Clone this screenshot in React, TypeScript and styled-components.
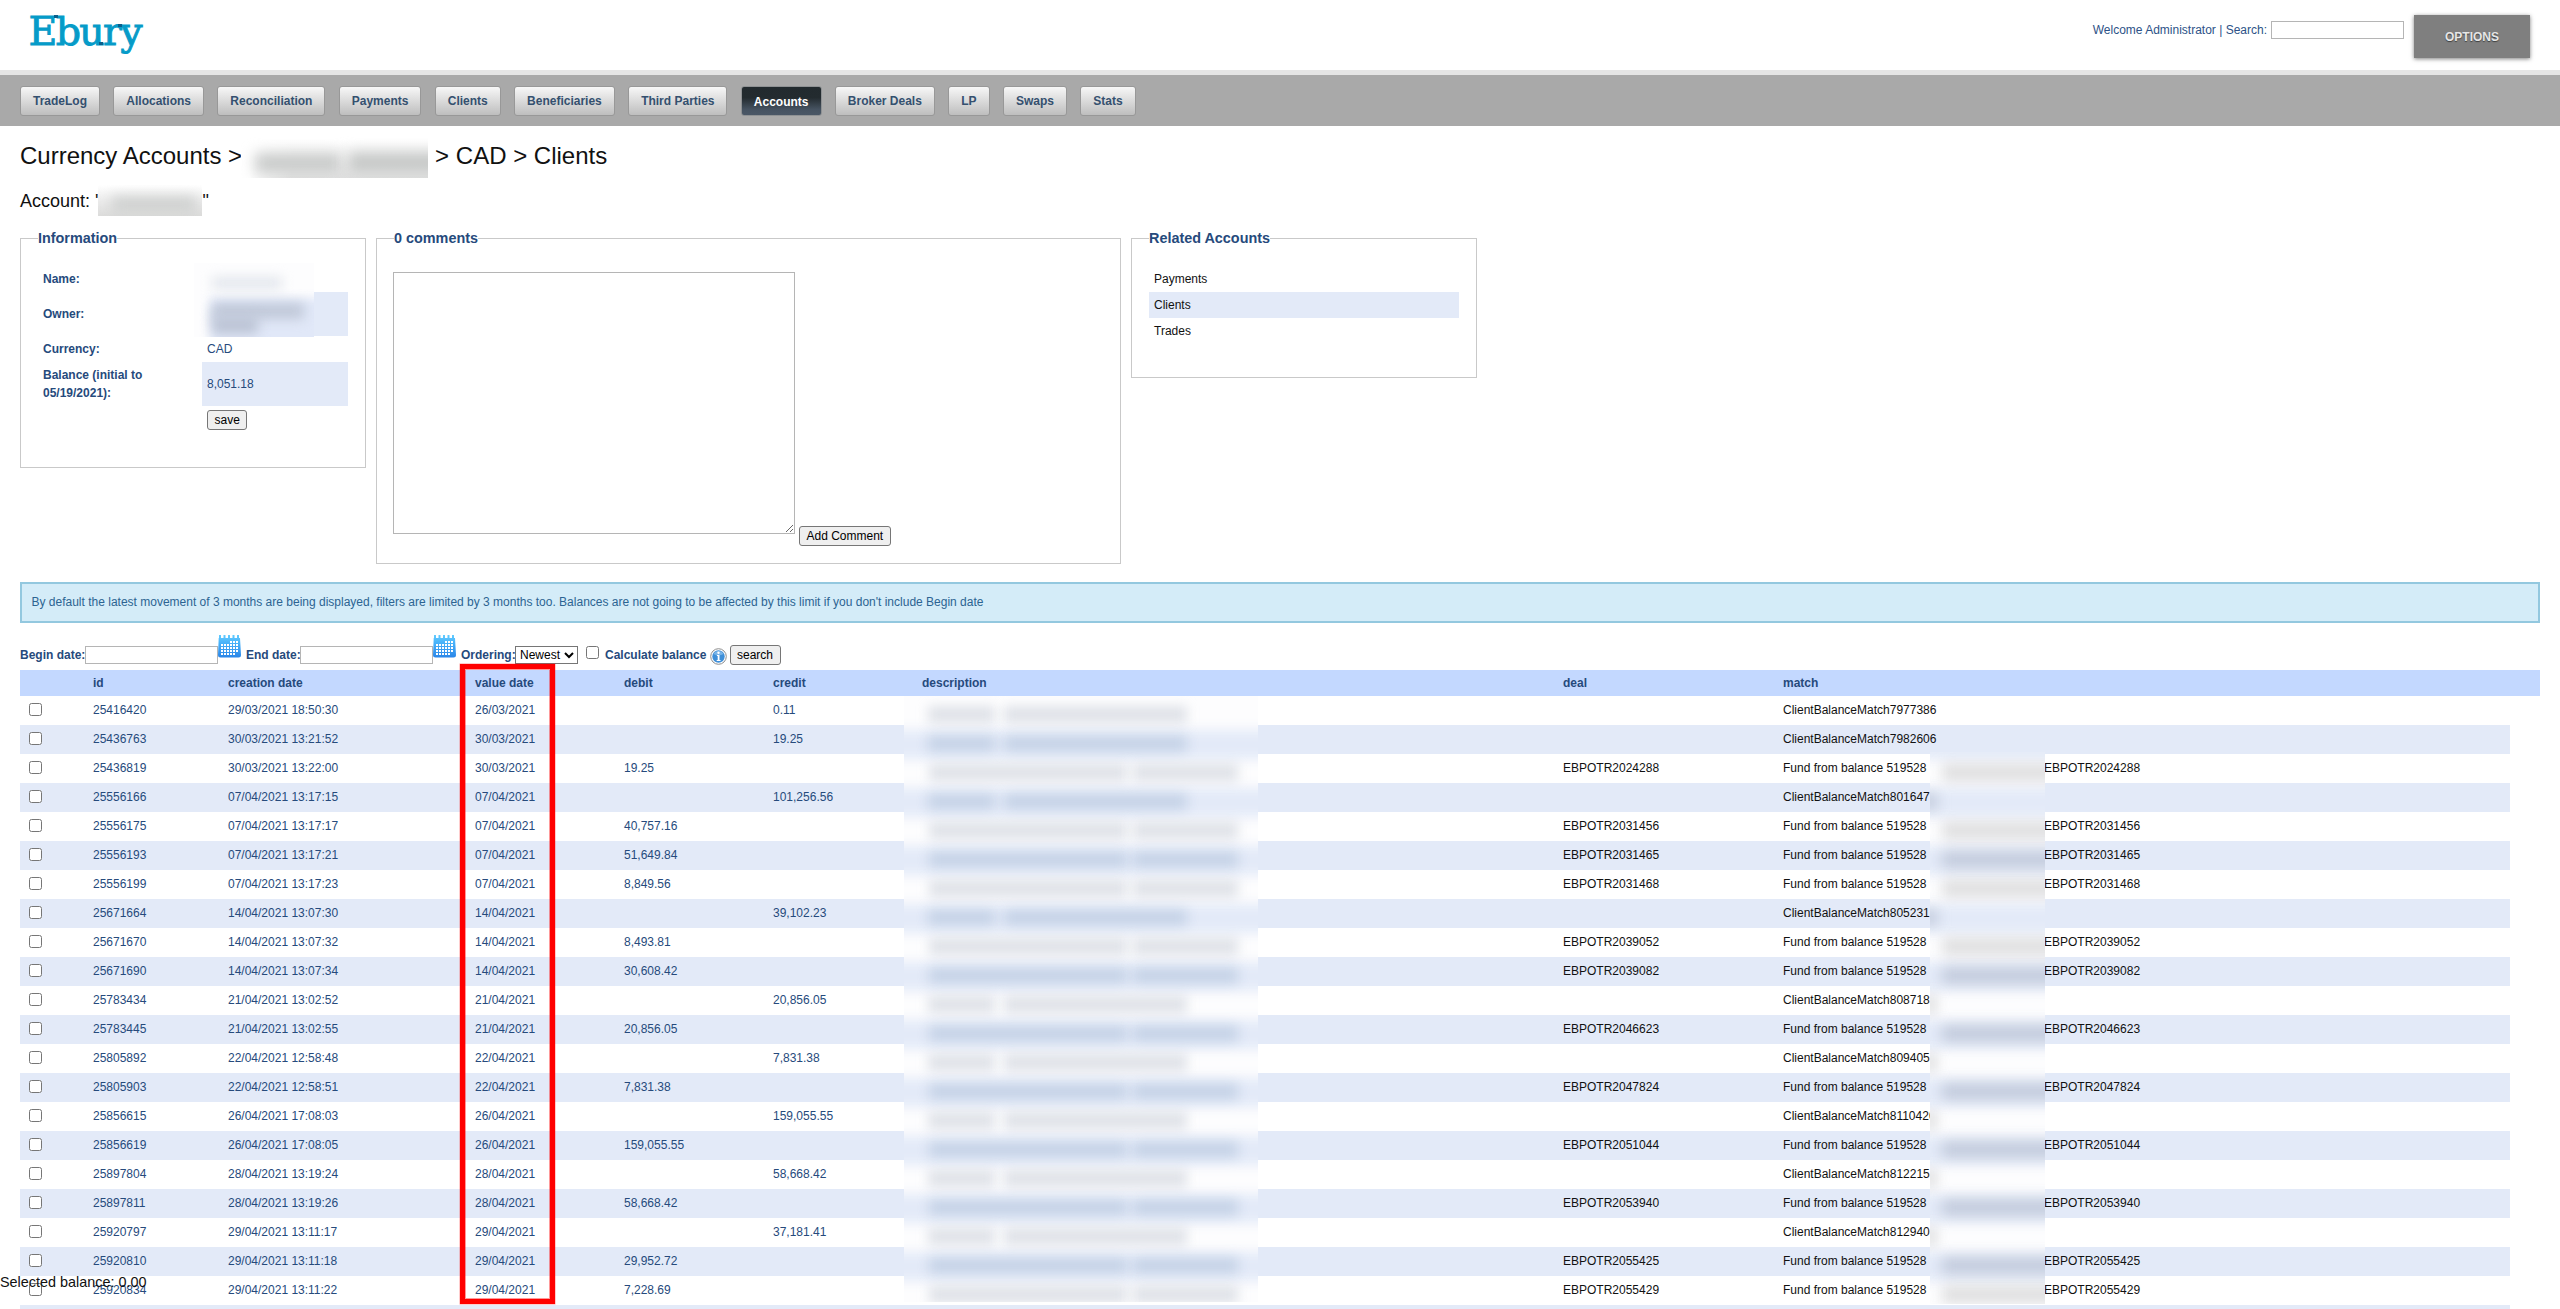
import React from "react";
import styled, { createGlobalStyle } from "styled-components";

const Global = createGlobalStyle`
  html, body { margin: 0; padding: 0; background: #fff; }
  body {
    font-family: "Liberation Sans", Arial, sans-serif;
    font-size: 12px;
    line-height: 18px;
    color: #264a7c;
    height: 1309px;
    overflow: hidden;
  }
  * { box-sizing: border-box; }
`;

const Page = styled.div`
  position: relative;
  width: 2560px;
  height: 1309px;
  overflow: hidden;
`;

const Header = styled.header`
  display: flex;
  justify-content: space-between;
  height: 75px;
  padding: 15px 30px 0;
  border-bottom: 5px solid #e5e5e5;
`;

const Logo = styled.svg`
  display: block;
  width: 116px;
  height: 44px;
  overflow: visible;
  text {
    font-family: "DejaVu Serif", serif;
    font-size: 39.5px;
    fill: #069bc8;
    stroke: #069bc8;
    stroke-width: 0.9;
  }
`;

const HeaderTools = styled.div`
  display: flex;
  align-items: flex-start;
`;

const Welcome = styled.span`
  padding-top: 6px;
  margin-right: 4px;
  color: #2d5287;
`;

const TextInput = styled.input`
  display: block;
  width: 133px;
  height: 18px;
  margin: 0;
  padding: 1px 2px;
  border: 1px solid #b5b5b5;
  border-radius: 0;
  background: #fff;
  font: inherit;
`;

const SearchInput = styled(TextInput)`
  margin: 6px 10px 0 0;
`;

const OptionsButton = styled.button`
  width: 116px;
  height: 43px;
  border: 0;
  padding: 0;
  background: #7f7f7f;
  box-shadow: 0 1px 4px rgba(0, 0, 0, 0.5);
  color: #e6e6e6;
  font: bold 12px/18px "Liberation Sans", Arial, sans-serif;
  text-shadow: 0 1px 1px rgba(0, 0, 0, 0.5);
`;

const Nav = styled.nav`
  display: flex;
  gap: 13.34px;
  height: 51px;
  padding: 11px 20px 0;
  background: #a9a9a9;
`;

const NavItem = styled.a<{ $active?: boolean }>`
  height: 30px;
  padding: 0 12px;
  border: 1px solid ${(p) => (p.$active ? "#8f9294" : "#989898")};
  border-radius: 3px;
  background: ${(p) =>
    p.$active
      ? "linear-gradient(#222a2e 0%, #232b2f 38%, #465361 80%, #4a5766 100%)"
      : "linear-gradient(#f7f7f7, #bebebe)"};
  color: ${(p) => (p.$active ? "#fff" : "#34506f")};
  font-weight: bold;
  line-height: ${(p) => (p.$active ? "30px" : "28px")};
  white-space: nowrap;
`;

const Content = styled.main`
  padding: 0 20px;
`;

const Title = styled.h1`
  display: flex;
  height: 52px;
  margin: 0;
  padding-top: 6px;
  color: #111;
  font-size: 24px;
  font-weight: normal;
  line-height: 48px;
  white-space: pre;
`;

const Subtitle = styled.h2`
  display: flex;
  height: 51px;
  margin: 0;
  padding-top: 7px;
  color: #111;
  font-size: 18px;
  font-weight: normal;
  line-height: 32px;
  white-space: pre;
`;

const TitleMask = styled.span`
  display: block;
  position: relative;
  overflow: hidden;
  width: 187px;
  height: 46px;
  margin: 0 7px 0 -1px;
  background: linear-gradient(100deg, #fff 8%, rgba(255, 255, 255, 0) 30%),
    linear-gradient(#fff 15%, #f6f6f6 60%, #e2e2e2);
`;

const SubtitleMask = styled.span`
  display: block;
  position: relative;
  overflow: hidden;
  width: 104px;
  height: 31px;
  background: linear-gradient(#fff, #ececec 50%, #dcdcdb);
`;

const Smudge = styled.i<{
  $x: number;
  $y: number;
  $w: number;
  $h: number;
  $c: string;
  $b?: number;
}>`
  position: absolute;
  left: ${(p) => p.$x}px;
  top: ${(p) => p.$y}px;
  width: ${(p) => p.$w}px;
  height: ${(p) => p.$h}px;
  background: ${(p) => p.$c};
  filter: blur(${(p) => p.$b ?? 5}px);
`;

const Panels = styled.section`
  display: flex;
  align-items: flex-start;
  gap: 10px;
  height: 353px;
`;

const Panel = styled.fieldset<{ $w: number; $h: number }>`
  position: relative;
  width: ${(p) => p.$w}px;
  height: ${(p) => p.$h}px;
  min-width: 0;
  margin: 0;
  padding: 19px 17px 0;
  border: 1px solid #c9c9c9;
`;

const Legend = styled.legend`
  margin: 0;
  padding: 0;
  font-size: 14.4px;
  font-weight: bold;
  line-height: 18px;
`;

const InfoGrid = styled.dl`
  display: grid;
  grid-template-columns: 164px 146px;
  margin: 0;
`;

const InfoLabel = styled.dt`
  padding: 4px 5px;
  font-weight: bold;
  align-self: center;
`;

const InfoValue = styled.dd<{ $shade?: boolean; $tall?: boolean }>`
  display: flex;
  align-items: center;
  min-height: ${(p) => (p.$tall ? 44 : 26)}px;
  margin: 0;
  padding: 4px 5px;
  background: ${(p) => (p.$shade ? "#e3eaf8" : "transparent")};
`;

const InfoMask = styled.div`
  position: absolute;
  left: 173px;
  top: 16px;
  width: 120px;
  height: 74px;
  overflow: hidden;
  background: #fdfdfe;
`;

const Button = styled.button`
  height: 20px;
  margin: 0;
  padding: 0 6.5px;
  border: 1px solid #767676;
  border-radius: 3px;
  background: #efefef;
  color: #000;
  font: 12px/17px "Liberation Sans", Arial, sans-serif;
`;

const CommentRow = styled.div`
  display: flex;
  align-items: flex-end;
  gap: 4px;
  padding-top: 6px;
`;

const CommentBox = styled.textarea`
  display: block;
  width: 402px;
  height: 262px;
  margin: 0 0 0 -1px;
  border: 1px solid #b5b5b5;
  border-radius: 0;
  resize: both;
`;

const CommentButton = styled(Button)`
  margin-bottom: -12px;
`;

const RelatedItem = styled.a<{ $shade?: boolean }>`
  display: block;
  height: 26px;
  padding: 4px 5px;
  background: ${(p) => (p.$shade ? "#e3eaf8" : "transparent")};
  color: #111;
`;

const Notice = styled.p`
  height: 41px;
  margin: 0;
  padding: 9px 9.5px;
  border: 2px solid #93c8df;
  background: #d4ecf8;
  color: #2c6492;
`;

const Filters = styled.form`
  display: flex;
  align-items: flex-start;
  height: 47px;
  color: #264a7c;
`;

const FilterLabel = styled.label<{ $w: number }>`
  flex: none;
  width: ${(p) => p.$w}px;
  margin-top: 23px;
  font-weight: bold;
  white-space: nowrap;
`;

const DateInput = styled(TextInput)`
  flex: none;
  margin-top: 23px;
`;

const CalendarSvg = styled.svg`
  flex: none;
  width: 23px;
  height: 23px;
  margin: 12px 5px 0 0;
`;

const OrderSelect = styled.select`
  flex: none;
  width: 63px;
  height: 18px;
  margin: 23px 8px 0 0;
  padding: 0;
  border: 1px solid #767676;
  border-radius: 0;
  background: #fff;
  color: #000;
  font: 12px "Liberation Sans", Arial, sans-serif;
`;

const Check = styled.input.attrs({ type: "checkbox" })`
  flex: none;
  width: 13px;
  height: 13px;
  margin: 0;
`;

const FilterCheck = styled(Check)`
  margin: 23px 6px 0 0;
`;

const InfoSvg = styled.svg`
  flex: none;
  width: 17px;
  height: 17px;
  margin: 25px 3px 0 0;
`;

const SearchButton = styled(Button)`
  margin-top: 22px;
`;

const Table = styled.div`
  position: relative;
`;

const HeadRow = styled.div`
  display: grid;
  grid-template-columns: 73px 135px 247px 149px 149px 149px 641px 220px 1fr;
  height: 26px;
  padding-top: 4px;
  background: #c3d8ff;
  font-weight: bold;
`;

const Row = styled.div<{ $shade: boolean }>`
  display: grid;
  grid-template-columns: 73px 135px 247px 149px 149px 149px 641px 220px 1fr;
  width: 2490px;
  height: 29px;
  padding-top: 5px;
  background: ${(p) => (p.$shade ? "#e3eaf8" : "#fff")};
`;

const CheckCell = styled.span`
  padding: 2px 0 0 9px;
  line-height: 0;
`;

const DarkCell = styled.span`
  color: #111;
`;

const MatchCell = styled(DarkCell)`
  display: flex;
  white-space: nowrap;
`;

const MatchFund = styled.span`
  width: 261px;
`;

const ColumnMask = styled.div<{ $x: number; $y: number; $w: number; $h: number }>`
  position: absolute;
  left: ${(p) => p.$x}px;
  top: ${(p) => p.$y}px;
  width: ${(p) => p.$w}px;
  height: ${(p) => p.$h}px;
  overflow: hidden;
  background: #fdfdfe;
`;

const Highlight = styled.div`
  position: absolute;
  left: 460px;
  top: 664px;
  width: 95px;
  height: 640px;
  border: 5px solid #f00;
  box-shadow: inset 0 0 0 1px rgba(255, 0, 0, 0.4), 0 0 0 0.5px rgba(255, 0, 0, 0.4);
`;

const SelectedBalance = styled.div`
  position: absolute;
  left: 0;
  top: 1273px;
  color: #111;
  font-size: 14.4px;
`;

type Entry = {
  id: string;
  created: string;
  value: string;
  debit?: string;
  credit?: string;
  deal?: string;
  match?: string;
};

const entries: Entry[] = [
  { id: "25416420", created: "29/03/2021 18:50:30", value: "26/03/2021", credit: "0.11", match: "7977386" },
  { id: "25436763", created: "30/03/2021 13:21:52", value: "30/03/2021", credit: "19.25", match: "7982606" },
  { id: "25436819", created: "30/03/2021 13:22:00", value: "30/03/2021", debit: "19.25", deal: "EBPOTR2024288" },
  { id: "25556166", created: "07/04/2021 13:17:15", value: "07/04/2021", credit: "101,256.56", match: "801647" },
  { id: "25556175", created: "07/04/2021 13:17:17", value: "07/04/2021", debit: "40,757.16", deal: "EBPOTR2031456" },
  { id: "25556193", created: "07/04/2021 13:17:21", value: "07/04/2021", debit: "51,649.84", deal: "EBPOTR2031465" },
  { id: "25556199", created: "07/04/2021 13:17:23", value: "07/04/2021", debit: "8,849.56", deal: "EBPOTR2031468" },
  { id: "25671664", created: "14/04/2021 13:07:30", value: "14/04/2021", credit: "39,102.23", match: "805231" },
  { id: "25671670", created: "14/04/2021 13:07:32", value: "14/04/2021", debit: "8,493.81", deal: "EBPOTR2039052" },
  { id: "25671690", created: "14/04/2021 13:07:34", value: "14/04/2021", debit: "30,608.42", deal: "EBPOTR2039082" },
  { id: "25783434", created: "21/04/2021 13:02:52", value: "21/04/2021", credit: "20,856.05", match: "808718" },
  { id: "25783445", created: "21/04/2021 13:02:55", value: "21/04/2021", debit: "20,856.05", deal: "EBPOTR2046623" },
  { id: "25805892", created: "22/04/2021 12:58:48", value: "22/04/2021", credit: "7,831.38", match: "809405" },
  { id: "25805903", created: "22/04/2021 12:58:51", value: "22/04/2021", debit: "7,831.38", deal: "EBPOTR2047824" },
  { id: "25856615", created: "26/04/2021 17:08:03", value: "26/04/2021", credit: "159,055.55", match: "8110420" },
  { id: "25856619", created: "26/04/2021 17:08:05", value: "26/04/2021", debit: "159,055.55", deal: "EBPOTR2051044" },
  { id: "25897804", created: "28/04/2021 13:19:24", value: "28/04/2021", credit: "58,668.42", match: "812215" },
  { id: "25897811", created: "28/04/2021 13:19:26", value: "28/04/2021", debit: "58,668.42", deal: "EBPOTR2053940" },
  { id: "25920797", created: "29/04/2021 13:11:17", value: "29/04/2021", credit: "37,181.41", match: "812940" },
  { id: "25920810", created: "29/04/2021 13:11:18", value: "29/04/2021", debit: "29,952.72", deal: "EBPOTR2055425" },
  { id: "25920834", created: "29/04/2021 13:11:22", value: "29/04/2021", debit: "7,228.69", deal: "EBPOTR2055429" },
];

const navItems = [
  "TradeLog", "Allocations", "Reconciliation", "Payments", "Clients", "Beneficiaries",
  "Third Parties", "Accounts", "Broker Deals", "LP", "Swaps", "Stats",
];

const gridDots: [number, number][] = [];
for (let r = 0; r < 5; r++)
  for (let c = 0; c < 6; c++)
    if (!(r === 0 && c < 3) && !(r === 4 && c > 4)) gridDots.push([c, r]);

function CalendarIcon() {
  return (
    <CalendarSvg viewBox="0 0 23 23">
      <defs>
        <linearGradient id="cal" x1="0" y1="0" x2="0" y2="1">
          <stop offset="0" stopColor="#62ccff" />
          <stop offset="0.4" stopColor="#45aef8" />
          <stop offset="1" stopColor="#2b86e8" />
        </linearGradient>
      </defs>
      <path
        fill="url(#cal)"
        d="M1 0h2v3h2.500V0h2v3h2.500V0h2v3h2.500V0h2v3h2.500V0h2v3H22l1 17q0 2.500-2.500 2.500h-18Q0 22.500 0 20L.7 3H1z"
      />
      {gridDots.map(([c, r]) => (
        <rect key={`${c}-${r}`} x={3 + c * 3} y={6 + r * 3} width="2" height="2" fill="#fff" />
      ))}
    </CalendarSvg>
  );
}

function InfoIcon() {
  return (
    <InfoSvg viewBox="0 0 17 17">
      <circle cx="8.500" cy="8.500" r="7.800" fill="#fff" stroke="#8d8d8d" strokeWidth="1" />
      <circle cx="8.500" cy="8.500" r="6.200" fill="#3f8fd8" />
      <path d="M3.500 6a5.600 5.600 0 0 1 10 0q-5 2.500-10 0z" fill="#79b4e8" />
      <circle cx="8.500" cy="4.700" r="1.200" fill="#fff" />
      <path d="M6.900 6.900h2.600v5h1v1.200H6.700v-1.200h1V8h-.8z" fill="#fff" />
    </InfoSvg>
  );
}

function DescriptionMask() {
  return (
    <ColumnMask $x={884} $y={26} $w={354} $h={606}>
      {entries.map(
        (e, i) =>
          i % 2 === 1 && <Smudge key={e.id} $x={-20} $y={i * 29 + 5} $w={400} $h={29} $c="#e3eaf8" $b={6} />
      )}
      {entries.map((e, i) => (
        <React.Fragment key={e.id}>
          {(e.deal
            ? [[25, 198], [229, 105]]
            : [[24, 67], [100, 183]]
          ).map(([x, w]) => (
            <Smudge
              key={x}
              $x={x}
              $y={i * 29 + 10}
              $w={w}
              $h={17}
              $b={6}
              $c={i % 2 ? "rgba(160,180,210,0.42)" : "rgba(172,180,194,0.36)"}
            />
          ))}
        </React.Fragment>
      ))}
    </ColumnMask>
  );
}

function MatchMask() {
  return (
    <ColumnMask $x={1910} $y={82} $w={115} $h={552}>
      {entries.map(
        (e, i) =>
          i % 2 === 1 && <Smudge key={e.id} $x={-20} $y={i * 29 - 51} $w={160} $h={29} $c="#e3eaf8" $b={6} />
      )}
      {entries.map(
        (e, i) =>
          i > 1 && (
            <Smudge
              key={e.id}
              $x={e.deal ? 12 : -8}
              $y={i * 29 - 46}
              $w={e.deal ? 120 : 15}
              $h={17}
              $b={6.5}
              $c={i % 2 ? "rgba(145,155,175,0.38)" : "rgba(165,165,163,0.34)"}
            />
          )
      )}
    </ColumnMask>
  );
}

export default function App() {
  return (
    <Page>
      <Global />
      <Header>
        <Logo viewBox="0 0 116 44">
          <text x="-1.500" y="29.700" textLength="114" lengthAdjust="spacing">Ebury</text>
          <rect x="24" y="0" width="4" height="3" fill="#0a5f8c" />
          <rect x="69" y="27" width="4" height="3" fill="#0a5f8c" />
          <rect x="88" y="9" width="4" height="3" fill="#0a5f8c" />
        </Logo>
        <HeaderTools>
          <Welcome>Welcome Administrator | Search:</Welcome>
          <SearchInput />
          <OptionsButton>OPTIONS</OptionsButton>
        </HeaderTools>
      </Header>
      <Nav>
        {navItems.map((n) => (
          <NavItem key={n} $active={n === "Accounts"}>{n}</NavItem>
        ))}
      </Nav>
      <Content>
        <Title>
          <span>{"Currency Accounts >"}</span>
          <TitleMask>
            <Smudge $x={14} $y={21} $w={86} $h={20} $b={7} $c="#c9cbca" />
            <Smudge $x={107} $y={20} $w={100} $h={21} $b={7} $c="#c6c8c7" />
          </TitleMask>
          <span>{"> CAD > Clients"}</span>
        </Title>
        <Subtitle>
          <span>{"Account: '"}</span>
          <SubtitleMask>
            <Smudge $x={14} $y={12} $w={84} $h={15} $b={6.5} $c="#cdcfce" />
          </SubtitleMask>
          <span>"</span>
        </Subtitle>
        <Panels>
          <Panel $w={346} $h={239}>
            <Legend>Information</Legend>
            <InfoGrid>
              <InfoLabel>Name:</InfoLabel>
              <InfoValue />
              <InfoLabel>Owner:</InfoLabel>
              <InfoValue $shade $tall />
              <InfoLabel>Currency:</InfoLabel>
              <InfoValue>CAD</InfoValue>
              <InfoLabel>Balance (initial to 05/19/2021):</InfoLabel>
              <InfoValue $shade $tall>8,051.18</InfoValue>
              <InfoLabel />
              <InfoValue><Button>save</Button></InfoValue>
            </InfoGrid>
            <InfoMask>
              <Smudge $x={16} $y={35} $w={130} $h={60} $c="#e1e8f8" />
              <Smudge $x={18} $y={14} $w={70} $h={12} $b={6} $c="#e2e6ec" />
              <Smudge $x={18} $y={40} $w={92} $h={16} $b={6} $c="#c0c8d8" />
              <Smudge $x={18} $y={53} $w={46} $h={18} $b={6} $c="#bcc4d5" />
            </InfoMask>
          </Panel>
          <Panel $w={745} $h={335}>
            <Legend>0 comments</Legend>
            <CommentRow>
              <CommentBox />
              <CommentButton>Add Comment</CommentButton>
            </CommentRow>
          </Panel>
          <Panel $w={346} $h={149}>
            <Legend>Related Accounts</Legend>
            <RelatedItem>Payments</RelatedItem>
            <RelatedItem $shade>Clients</RelatedItem>
            <RelatedItem>Trades</RelatedItem>
          </Panel>
        </Panels>
        <Notice>
          By default the latest movement of 3 months are being displayed, filters are limited by 3
          months too. Balances are not going to be affected by this limit if you don't include Begin date
        </Notice>
        <Filters>
          <FilterLabel $w={65}>Begin date:</FilterLabel>
          <DateInput />
          <CalendarIcon />
          <FilterLabel $w={54}>End date:</FilterLabel>
          <DateInput />
          <CalendarIcon />
          <FilterLabel $w={54}>Ordering:</FilterLabel>
          <OrderSelect><option>Newest</option></OrderSelect>
          <FilterCheck />
          <FilterLabel $w={104.5}>Calculate balance</FilterLabel>
          <InfoIcon />
          <SearchButton type="button">search</SearchButton>
        </Filters>
        <Table>
          <HeadRow>
            <span />
            <span>id</span>
            <span>creation date</span>
            <span>value date</span>
            <span>debit</span>
            <span>credit</span>
            <span>description</span>
            <span>deal</span>
            <span>match</span>
          </HeadRow>
          {entries.map((e, i) => (
            <Row key={e.id} $shade={i % 2 === 1}>
              <CheckCell><Check /></CheckCell>
              <span>{e.id}</span>
              <span>{e.created}</span>
              <span>{e.value}</span>
              <span>{e.debit}</span>
              <span>{e.credit}</span>
              <span />
              <DarkCell>{e.deal}</DarkCell>
              <MatchCell>
                {e.deal ? (
                  <>
                    <MatchFund>Fund from balance 519528</MatchFund>
                    <span>{e.deal}</span>
                  </>
                ) : (
                  <span>ClientBalanceMatch{e.match}</span>
                )}
              </MatchCell>
            </Row>
          ))}
          <Row $shade />
          <DescriptionMask />
          <MatchMask />
        </Table>
      </Content>
      <Highlight />
      <SelectedBalance>Selected balance: 0.00</SelectedBalance>
    </Page>
  );
}
